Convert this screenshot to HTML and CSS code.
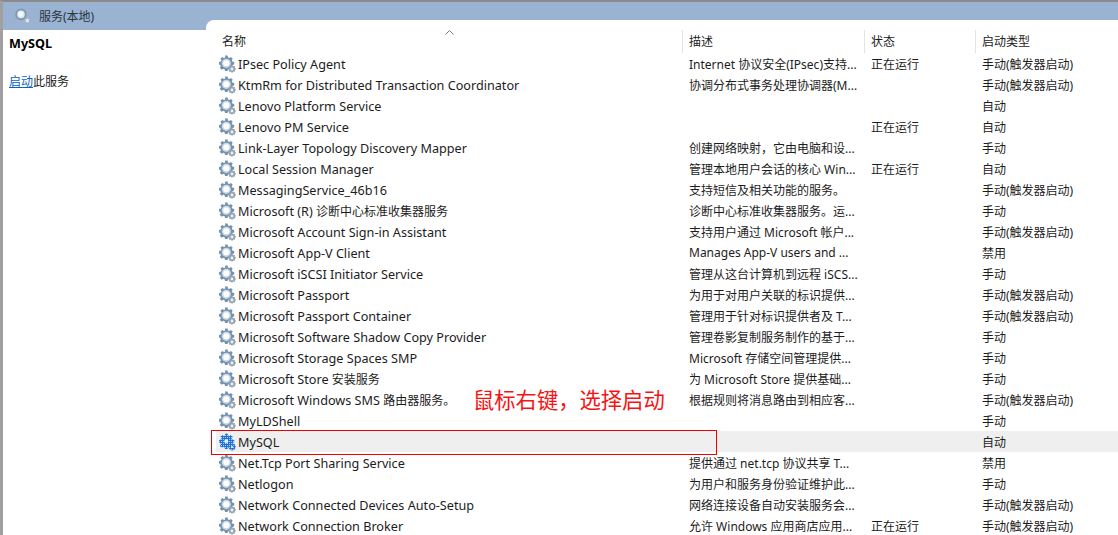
FILE: index.html
```html
<!DOCTYPE html>
<html lang="zh">
<head>
<meta charset="utf-8">
<title>服务(本地)</title>
<link rel="stylesheet" href="styles.css">
</head>
<body>
<svg class="defs" width="0" height="0" aria-hidden="true">
  <defs>
    <pattern id="dither" width="2" height="2" patternUnits="userSpaceOnUse">
      <rect width="2" height="2" fill="#1f72cf"/>
      <rect width="1" height="1" fill="#a8cdf3"/>
    </pattern>
    <symbol id="gear" viewBox="0 0 18 18">
      <path d="M6 .5h2.6l.4 1.9 1.3.5 1.6-1 1.9 1.8-1.1 1.6.6 1.3 1.9.4v2.6l-1.9.4-.6 1.3 1.1 1.6-1.9 1.8-1.6-1-1.3.5-.4 1.9H6l-.4-1.9-1.3-.5-1.6 1-1.9-1.8 1.1-1.6-.6-1.3L0 9.6V7l1.9-.4.6-1.3-1.1-1.6 1.9-1.8 1.6 1 1.3-.5z" fill="#7592ad"/>
      <circle cx="7.3" cy="8.3" r="4.600" fill="#c9d8e6"/>
      <circle cx="7.3" cy="8.3" r="3" fill="#fff"/>
      <path d="M12.2 10.2h1.6l.3 1 1-.5 1.1 1.1-.5 1 1 .3v1.6l-1 .3.5 1-1.1 1.1-1-.5-.3 1h-1.6l-.3-1-1 .5-1.1-1.1.5-1-1-.3v-1.6l1-.3-.5-1 1.1-1.1 1 .5z" fill="#97a4b1"/>
      <circle cx="13" cy="14" r="1.4" fill="#eef2f6"/>
    </symbol>
    <symbol id="gear-on" viewBox="0 0 18 18">
      <path d="M6 .5h2.6l.4 1.9 1.3.5 1.6-1 1.9 1.8-1.1 1.6.6 1.3 1.9.4v2.6l-1.9.4-.6 1.3 1.1 1.6-1.9 1.8-1.6-1-1.3.5-.4 1.9H6l-.4-1.9-1.3-.5-1.6 1-1.9-1.8 1.1-1.6-.6-1.3L0 9.6V7l1.9-.4.6-1.3-1.1-1.6 1.9-1.8 1.6 1 1.3-.5z" fill="url(#dither)"/>
      <circle cx="7.3" cy="8.3" r="2" fill="#e8f1fb"/>
      <path d="M12.2 10.2h1.6l.3 1 1-.5 1.1 1.1-.5 1 1 .3v1.6l-1 .3.5 1-1.1 1.1-1-.5-.3 1h-1.6l-.3-1-1 .5-1.1-1.1.5-1-1-.3v-1.6l1-.3-.5-1 1.1-1.1 1 .5z" fill="url(#dither)"/>
      <circle cx="13" cy="14" r="1.1" fill="#e8f1fb"/>
    </symbol>
  </defs>
</svg>
<div class="window">
  <header class="titlebar">
    <svg class="title-icon" viewBox="0 0 16 16" aria-hidden="true">
      <circle cx="6" cy="6.4" r="4.8" fill="#dfeaf4" stroke="#8199b0" stroke-width="2"/>
      <circle cx="5.600" cy="6" r="2.400" fill="#f6fafd"/>
      <circle cx="12.400" cy="12.600" r="2.300" fill="#e6ecf2" stroke="#a3b1bf" stroke-width="1.600" stroke-dasharray="1.300 .7"/>
    </svg>
    <span class="title-text">服务(本地)</span>
  </header>
  <div class="content">
    <aside class="side">
      <h2 class="side-title">MySQL</h2>
      <p class="side-action"><a class="side-link">启动</a>此服务</p>
    </aside>
    <main class="list">
      <div class="row head">
        <div class="cell">名称<svg class="sort" viewBox="0 0 9 5" aria-hidden="true"><path d="M.5 4.500l4-4 4 4" fill="none" stroke="#7a7a7a"/></svg></div>
        <div class="cell">描述</div>
        <div class="cell">状态</div>
        <div class="cell">启动类型</div>
      </div>
      <div class="row"><div class="cell name"><svg class="gear"><use href="#gear"/></svg>IPsec Policy Agent</div><div class="cell">Internet 协议安全(IPsec)支持...</div><div class="cell">正在运行</div><div class="cell">手动(触发器启动)</div></div>
      <div class="row"><div class="cell name"><svg class="gear"><use href="#gear"/></svg>KtmRm for Distributed Transaction Coordinator</div><div class="cell">协调分布式事务处理协调器(M...</div><div class="cell"></div><div class="cell">手动(触发器启动)</div></div>
      <div class="row"><div class="cell name"><svg class="gear"><use href="#gear"/></svg>Lenovo Platform Service</div><div class="cell"></div><div class="cell"></div><div class="cell">自动</div></div>
      <div class="row"><div class="cell name"><svg class="gear"><use href="#gear"/></svg>Lenovo PM Service</div><div class="cell"></div><div class="cell">正在运行</div><div class="cell">自动</div></div>
      <div class="row"><div class="cell name"><svg class="gear"><use href="#gear"/></svg>Link-Layer Topology Discovery Mapper</div><div class="cell">创建网络映射，它由电脑和设...</div><div class="cell"></div><div class="cell">手动</div></div>
      <div class="row"><div class="cell name"><svg class="gear"><use href="#gear"/></svg>Local Session Manager</div><div class="cell">管理本地用户会话的核心 Win...</div><div class="cell">正在运行</div><div class="cell">自动</div></div>
      <div class="row"><div class="cell name"><svg class="gear"><use href="#gear"/></svg>MessagingService_46b16</div><div class="cell">支持短信及相关功能的服务。</div><div class="cell"></div><div class="cell">手动(触发器启动)</div></div>
      <div class="row"><div class="cell name"><svg class="gear"><use href="#gear"/></svg><span>Microsoft (R) <span class="cjk">诊断中心标准收集器服务</span></span></div><div class="cell">诊断中心标准收集器服务。运...</div><div class="cell"></div><div class="cell">手动</div></div>
      <div class="row"><div class="cell name"><svg class="gear"><use href="#gear"/></svg>Microsoft Account Sign-in Assistant</div><div class="cell">支持用户通过 Microsoft 帐户...</div><div class="cell"></div><div class="cell">手动(触发器启动)</div></div>
      <div class="row"><div class="cell name"><svg class="gear"><use href="#gear"/></svg>Microsoft App-V Client</div><div class="cell">Manages App-V users and ...</div><div class="cell"></div><div class="cell">禁用</div></div>
      <div class="row"><div class="cell name"><svg class="gear"><use href="#gear"/></svg>Microsoft iSCSI Initiator Service</div><div class="cell">管理从这台计算机到远程 iSCS...</div><div class="cell"></div><div class="cell">手动</div></div>
      <div class="row"><div class="cell name"><svg class="gear"><use href="#gear"/></svg>Microsoft Passport</div><div class="cell">为用于对用户关联的标识提供...</div><div class="cell"></div><div class="cell">手动(触发器启动)</div></div>
      <div class="row"><div class="cell name"><svg class="gear"><use href="#gear"/></svg>Microsoft Passport Container</div><div class="cell">管理用于针对标识提供者及 T...</div><div class="cell"></div><div class="cell">手动(触发器启动)</div></div>
      <div class="row"><div class="cell name"><svg class="gear"><use href="#gear"/></svg>Microsoft Software Shadow Copy Provider</div><div class="cell">管理卷影复制服务制作的基于...</div><div class="cell"></div><div class="cell">手动</div></div>
      <div class="row"><div class="cell name"><svg class="gear"><use href="#gear"/></svg>Microsoft Storage Spaces SMP</div><div class="cell">Microsoft 存储空间管理提供...</div><div class="cell"></div><div class="cell">手动</div></div>
      <div class="row"><div class="cell name"><svg class="gear"><use href="#gear"/></svg><span>Microsoft Store <span class="cjk">安装服务</span></span></div><div class="cell">为 Microsoft Store 提供基础...</div><div class="cell"></div><div class="cell">手动</div></div>
      <div class="row"><div class="cell name"><svg class="gear"><use href="#gear"/></svg><span>Microsoft Windows SMS <span class="cjk">路由器服务。</span></span></div><div class="cell">根据规则将消息路由到相应客...</div><div class="cell"></div><div class="cell">手动(触发器启动)</div></div>
      <div class="row"><div class="cell name"><svg class="gear"><use href="#gear"/></svg>MyLDShell</div><div class="cell"></div><div class="cell"></div><div class="cell">手动</div></div>
      <div class="row selected"><div class="cell name"><svg class="gear"><use href="#gear-on"/></svg>MySQL</div><div class="cell"></div><div class="cell"></div><div class="cell">自动</div></div>
      <div class="row"><div class="cell name"><svg class="gear"><use href="#gear"/></svg>Net.Tcp Port Sharing Service</div><div class="cell">提供通过 net.tcp 协议共享 T...</div><div class="cell"></div><div class="cell">禁用</div></div>
      <div class="row"><div class="cell name"><svg class="gear"><use href="#gear"/></svg>Netlogon</div><div class="cell">为用户和服务身份验证维护此...</div><div class="cell"></div><div class="cell">手动</div></div>
      <div class="row"><div class="cell name"><svg class="gear"><use href="#gear"/></svg>Network Connected Devices Auto-Setup</div><div class="cell">网络连接设备自动安装服务会...</div><div class="cell"></div><div class="cell">手动(触发器启动)</div></div>
      <div class="row"><div class="cell name"><svg class="gear"><use href="#gear"/></svg>Network Connection Broker</div><div class="cell">允许 Windows 应用商店应用...</div><div class="cell">正在运行</div><div class="cell">手动(触发器启动)</div></div>
      <div class="annotation">鼠标右键，选择启动</div>
      <div class="highlight"></div>
    </main>
  </div>
</div>
</body>
</html>
```
FILE: styles.css
```css
html, body {
  margin: 0;
  height: 100%;
  overflow: hidden;
  background: #fff;
}
body {
  font-family: "Noto Sans", "Noto Sans CJK SC", sans-serif;
  font-size: 13px;
  color: #1c1c1c;
}
.defs {
  position: absolute;
}
.window {
  height: 100%;
  box-sizing: border-box;
  display: flex;
  flex-direction: column;
  border-top: 2px solid #8a8a8a;
  border-left: 3px solid #a0a0a0;
}
.titlebar {
  flex: 0 0 28px;
  display: flex;
  align-items: center;
  gap: 8px;
  padding-left: 12px;
  background: #9ab3d2;
}
.title-icon {
  width: 16px;
  height: 16px;
}
.title-text {
  font-size: 12px;
  color: #2a3440;
}
.content {
  flex: 1;
  display: flex;
  min-height: 0;
}
.side {
  flex: 0 0 203px;
  box-sizing: border-box;
  padding: 5px 6px;
}
.side-title {
  margin: 0;
  font-size: 12.6px;
  line-height: 18px;
  font-weight: 700;
  color: #000;
}
.side-action {
  margin: 20px 0 0;
  line-height: 18px;
  font-size: 12px;
}
.side-link {
  color: #0b62c4;
  text-decoration: underline;
}
.list {
  flex: 1;
  position: relative;
  margin-top: -10px;
  padding: 10px 0 0 10px;
  background: #fff;
  border-top-left-radius: 8px;
  min-width: 0;
}
.row {
  display: grid;
  grid-template-columns: 466px 182px 111px 1fr;
  height: 21px;
  align-items: center;
  white-space: nowrap;
}
.head {
  height: 23px;
}
.head .cell {
  position: relative;
  padding-left: 6px;
  height: 23px;
  line-height: 23px;
  font-size: 12px;
  border-left: 1px solid #e4e4e4;
}
.head .cell:first-child {
  border-left: 0;
}
.cell {
  padding-left: 7px;
  font-size: 12px;
  overflow: hidden;
}
.cell.name {
  display: flex;
  align-items: center;
  gap: 1px;
  padding-left: 3px;
  font-size: 12.65px;
}
.cjk {
  font-size: 12px;
}
.gear {
  flex: none;
  width: 18px;
  height: 18px;
}
.sort {
  position: absolute;
  left: 229px;
  top: 0;
  width: 9px;
  height: 5px;
}
.selected {
  background: #efefef;
}
.annotation {
  position: absolute;
  left: 267px;
  top: 366px;
  font-size: 21.3px;
  line-height: 28px;
  color: #f41414;
}
.highlight {
  position: absolute;
  left: 5px;
  top: 410px;
  width: 504px;
  height: 23px;
  border: 1px solid #f00000;
}
```
